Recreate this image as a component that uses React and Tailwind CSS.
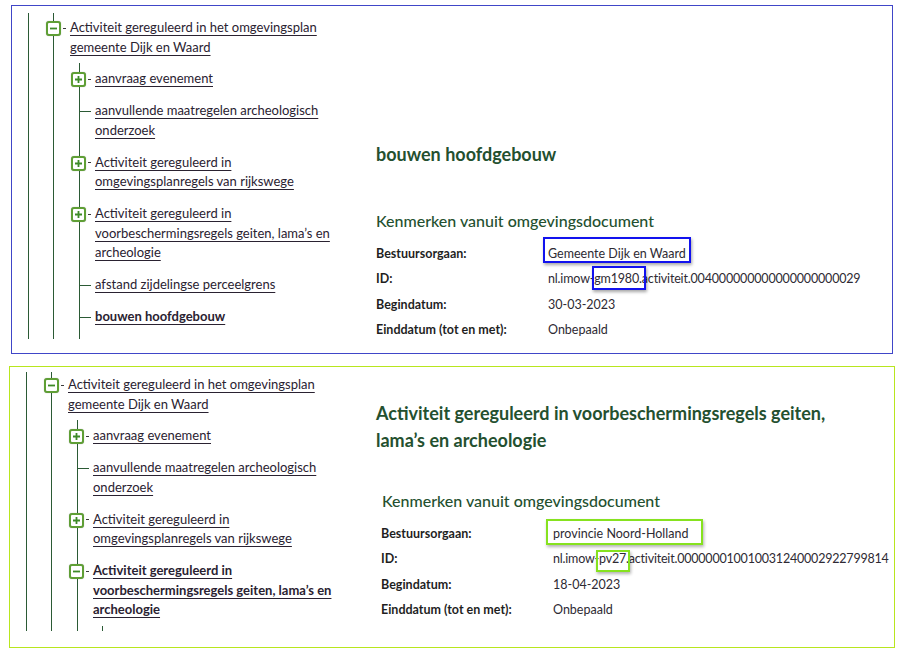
const LINE = 'border-[#2b5a35]';

function Toggle({ open }) {
  return (
    <span className="mt-[3px] flex h-[15px] w-[15px] shrink-0 items-center justify-center rounded-[3px] border-2 border-[#5f9f35] bg-white shadow-[0_0_1px_rgba(0,0,0,0.35)]">
      <svg width="9" height="9" viewBox="0 0 9 9">
        <path d={open ? 'M1 4.5h7' : 'M1 4.5h7M4.5 1v7'} stroke="#3d8a27" strokeWidth="1.8" />
      </svg>
    </span>
  );
}

function TreeLink({ children, bold }) {
  return (
    <a className={`ml-[4px] text-[13px] leading-[19.5px] text-[#2a2231] underline decoration-[#2a2231] underline-offset-[3px] ${bold ? 'font-bold' : ''}`}>
      {children}
    </a>
  );
}

// a node that can be opened or closed, the icon sits on the parent line
function Branch({ label, open, bold, shift, children }) {
  return (
    <div className="pb-[12.5px]">
      <div className={`flex items-start ${shift}`}>
        <Toggle open={open} />
        <span className="ml-[2px] mt-[9.5px] h-px w-[3px] shrink-0 bg-[#3a3a3a]" />
        <TreeLink bold={bold}>{label}</TreeLink>
      </div>
      {children}
    </div>
  );
}

function Leaf({ label, bold }) {
  return (
    <div className="flex items-start pb-[12.5px]">
      <span className="mt-[9.5px] h-px w-[11px] shrink-0 bg-[#2b5a35]" />
      <TreeLink bold={bold}>{label}</TreeLink>
    </div>
  );
}

function Tree({ top, last, clip }) {
  return (
    <div className={`w-[330px] shrink-0 self-start pl-[16px] ${clip}`}>
      <div className={`border-l ${LINE} pl-[24px]`}>
        <div className={`border-l ${LINE} ${top}`}>
          <div>
            <div className="-ml-[8px] flex items-start">
              <Toggle open />
              <span className="ml-[2px] mt-[9.5px] h-px w-[3px] shrink-0 bg-[#3a3a3a]" />
              <TreeLink>Activiteit gereguleerd in het omgevingsplan gemeente Dijk en Waard</TreeLink>
            </div>
            <div className={`ml-[25px] mt-[6px] border-l ${LINE} pt-[6px]`}>
              <Branch shift="-ml-[9px]" label="aanvraag evenement" />
              <Leaf label="aanvullende maatregelen archeologisch onderzoek" />
              <Branch shift="-ml-[9px]" label="Activiteit gereguleerd in omgevingsplanregels van rijkswege" />
              {last}
            </div>
          </div>
        </div>
      </div>
    </div>
  );
}

function Mark({ children, tone, box }) {
  return (
    <span className="relative inline-block">
      {children}
      <span className={`pointer-events-none absolute ${box} ${tone}`} />
    </span>
  );
}

function Facts({ rows, className }) {
  return (
    <div className={`grid grid-cols-[172px_1fr] text-[12.5px] leading-[25.4px] ${className}`}>
      {rows.map(([k, v]) => (
        <div key={k} className="contents">
          <span className="font-bold text-[#1f1f1f]">{k}</span>
          <span className="whitespace-nowrap text-[#2e2a33]">{v}</span>
        </div>
      ))}
    </div>
  );
}

const BLUE = 'border-[2.5px] border-[#1212ee] shadow-[1px_2px_3px_rgba(0,0,0,0.35)]';
const LIME = 'border-[2.5px] border-[#86e21f] shadow-[1px_2px_3px_rgba(0,0,0,0.3)]';

export default function App() {
  return (
    <div className="min-h-[656px] w-[905px] bg-white font-['Lato',sans-serif] pt-[5px]">
      {/* first capture */}
      <div className="ml-[11px] flex h-[349px] w-[882px] border border-[#4046c8] pt-[7px]">
        <Tree
          top="pt-[5px]"
          clip=""
          last={
            <>
              <Branch shift="-ml-[9px]" label="Activiteit gereguleerd in voorbeschermingsregels geiten, lama’s en archeologie" />
              <Leaf label="afstand zijdelingse perceelgrens" />
              <Leaf label="bouwen hoofdgebouw" bold />
            </>
          }
        />
        <div className="ml-[34px] pt-[128px]">
          <h2 className="text-[18px] font-bold leading-[27px] text-[#24502f]">bouwen hoofdgebouw</h2>
          <h3 className="mt-[41px] text-[16px] font-medium leading-[24px] text-[#24502f]">Kenmerken vanuit omgevingsdocument</h3>
          <Facts
            className="mt-[8px]"
            rows={[
              ['Bestuursorgaan:', <Mark tone={BLUE} box="-left-[5px] -right-[5px] -top-[4px] bottom-[3px]">Gemeente Dijk en Waard</Mark>],
              ['ID:', <span className="tracking-[-0.17px]">nl.imow-<Mark tone={BLUE} box="-left-[2px] -right-[7px] top-0 bottom-[2px]">gm1980</Mark>.activiteit.004000000000000000000029</span>],
              ['Begindatum:', '30-03-2023'],
              ['Einddatum (tot en met):', 'Onbepaald'],
            ]}
          />
        </div>
      </div>

      {/* second capture */}
      <div className="ml-[9px] mt-[12px] flex h-[282px] w-[886px] border border-[#b8e61e] pt-[5px]">
        <Tree
          top="pt-[3px]"
          clip="h-[259px] overflow-hidden"
          last={
            <Branch open bold shift="-ml-[9px]" label="Activiteit gereguleerd in voorbeschermingsregels geiten, lama’s en archeologie">
              <div className={`ml-[24px] mt-[6px] h-[20px] border-l ${LINE}`} />
            </Branch>
          }
        />
        <div className="ml-[36px] pt-[28px]">
          <h2 className="max-w-[470px] text-[18px] font-bold leading-[27px] text-[#24502f]">
            Activiteit gereguleerd in voorbeschermingsregels geiten, lama’s en archeologie
          </h2>
          <div className="pl-[6px]">
            <h3 className="mt-[35px] text-[16px] font-medium leading-[24px] text-[#24502f]">Kenmerken vanuit omgevingsdocument</h3>
            <Facts
              className="mt-[8px] -ml-[1px]"
              rows={[
                ['Bestuursorgaan:', <Mark tone={LIME} box="-left-[7px] -right-[15px] top-[-2px] bottom-[1px]">provincie Noord-Holland</Mark>],
                ['ID:', <span className="tracking-[-0.2px]">nl.imow-<Mark tone={LIME} box="-left-[3px] -right-[4px] top-[4px] bottom-[0px]">pv27</Mark>.activiteit.000000010010031240002922799814</span>],
                ['Begindatum:', '18-04-2023'],
                ['Einddatum (tot en met):', 'Onbepaald'],
              ]}
            />
          </div>
        </div>
      </div>
    </div>
  );
}
